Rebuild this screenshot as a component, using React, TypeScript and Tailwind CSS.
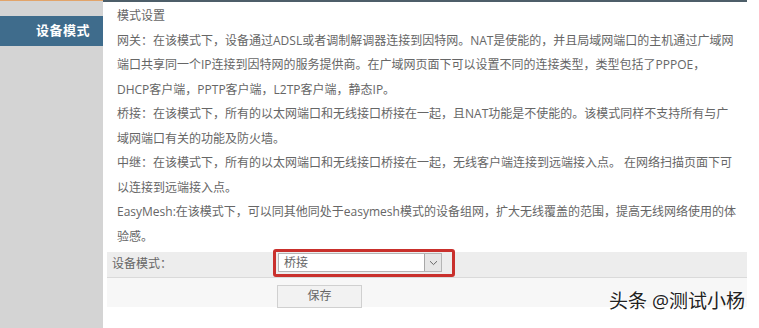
import React from "react";

const lines = [
  "模式设置",
  "网关：在该模式下，设备通过ADSL或者调制解调器连接到因特网。NAT是使能的，并且局域网端口的主机通过广域网",
  "端口共享同一个IP连接到因特网的服务提供商。在广域网页面下可以设置不同的连接类型，类型包括了PPPOE，",
  "DHCP客户端，PPTP客户端，L2TP客户端，静态IP。",
  "桥接：在该模式下，所有的以太网端口和无线接口桥接在一起，且NAT功能是不使能的。该模式同样不支持所有与广",
  "域网端口有关的功能及防火墙。",
  "中继：在该模式下，所有的以太网端口和无线接口桥接在一起，无线客户端连接到远端接入点。 在网络扫描页面下可",
  "以连接到远端接入点。",
  "EasyMesh:在该模式下，可以同其他同处于easymesh模式的设备组网，扩大无线覆盖的范围，提高无线网络使用的体",
  "验感。",
];

export default function App() {
  return (
    <div
      className="relative flex w-[759px] h-[328px] bg-white overflow-hidden"
      style={{ fontFamily: '"Open Sans", "Noto Sans CJK SC", sans-serif' }}
    >
      {/* Sidebar */}
      <div className="w-[103px] shrink-0 bg-[#d4d4d4] flex flex-col">
        <div className="h-[1px] bg-[#e2a46a]" />
        <div className="mt-[15px] h-[30px] bg-[#3f6c8c] flex items-center justify-end pr-[13px]">
          <span className="text-[13px] font-bold text-white tracking-[0.5px]">设备模式</span>
        </div>
      </div>

      {/* Main */}
      <div className="w-[644px] shrink-0 flex flex-col">
        <div className="h-[2px] bg-[#4d5e69]" />
        <div className="pl-[14px] pt-[2px] text-[12px] leading-[24.5px] text-[#666]">
          {lines.map((l, i) => (
            <div key={i} className="whitespace-nowrap">{l}</div>
          ))}
        </div>

        {/* Form */}
        <div className="ml-[4px] mt-[3px]">
          <div className="flex h-[26px] bg-[#ededed] border-b border-[#dadada]">
            <div className="w-[171px] pl-[5px] text-[12px] leading-[24px] text-[#666]">设备模式：</div>
            <div className="relative mt-[1px] w-[164px] h-[19px] bg-white border border-[#b5b5b5] flex items-center justify-between">
              <span className="pl-[5px] text-[12px] text-[#666] leading-none">桥接</span>
              <div className="w-[17px] h-[17px] bg-[#e6e6e6] border-l border-[#a8a8a8] flex items-center justify-center">
                <svg width="9" height="6" viewBox="0 0 9 6">
                  <path d="M1 1.2 L4.5 4.6 L8 1.2" fill="none" stroke="#666" strokeWidth="1" />
                </svg>
              </div>
              <div className="absolute -left-[6px] -top-[5px] w-[182px] h-[28px] border-[3px] border-[#c9302c] rounded-[3px]" />
            </div>
          </div>
          <div className="h-[29px] bg-[#f7f7f7] pt-[4px] pl-[170px]">
            <button className="w-[85px] h-[23px] bg-[#f2f2f2] border border-[#d0d0d0] text-[12px] text-[#666]">
              保存
            </button>
          </div>
        </div>
      </div>

      {/* Watermark */}
      <div
        className="absolute left-[609px] top-[292px] text-[19px] leading-none text-[#222] whitespace-nowrap"
        style={{ textShadow: "0 0 2px #fff, 0 0 2px #fff, 1px 1px 1px #fff" }}
      >
        头条 @测试小杨
      </div>
    </div>
  );
}
